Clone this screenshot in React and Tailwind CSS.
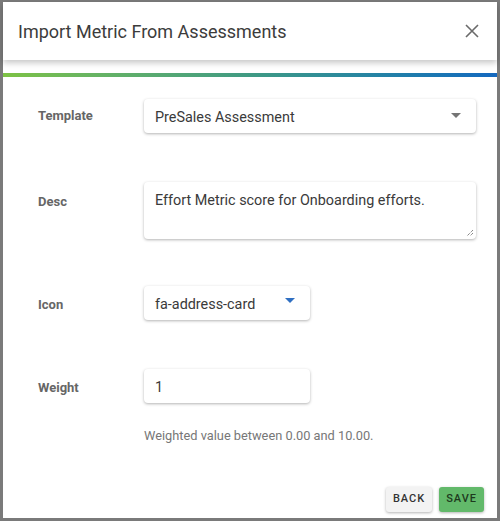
export default function App() {
  return (
    <div className="w-[500px] h-[521px] bg-[#7a7a7a] pl-[3px] pr-[3px] pt-[2px] pb-[3px]" style={{ fontFamily: "Roboto, 'Liberation Sans', sans-serif" }}>
      <div className="w-full h-full bg-white flex flex-col">
        <div className="h-[58px] flex items-center justify-between pl-[15px] pr-[15px] shadow-[0_3px_6px_rgba(0,0,0,0.22)] relative z-10">
          <div className="text-[18px] text-[#3c3c3c]">Import Metric From Assessments</div>
          <svg width="14" height="14" viewBox="0 0 14 14" className="mr-[3px]">
            <path d="M1 1L13 13M13 1L1 13" stroke="#6a6a6a" strokeWidth="1.6" />
          </svg>
        </div>
        <div className="h-[13px]" />
        <div className="h-[4px] bg-gradient-to-r from-[#7dc243] via-[#3f9a83] to-[#1568bf]" />
        <div className="flex-1 flex flex-col pl-[35px] pr-[21px]">
          <div className="flex items-start mt-[22px]">
            <div className="w-[106px] text-[13px] font-bold text-[#666] pt-[7px]">Template</div>
            <div className="flex-1 h-[34px] rounded-[4px] shadow-[0_1px_3px_rgba(0,0,0,0.3)] flex items-center justify-between pl-[11px] pr-[15px] pt-[3px] text-[14.4px] text-[#3a3a3a]">
              <span>PreSales Assessment</span>
              <svg width="10" height="5" viewBox="0 0 10 5" className="mb-[4px]"><path d="M0 0L10 0L5 5Z" fill="#757575" /></svg>
            </div>
          </div>
          <div className="flex items-start mt-[49px]">
            <div className="w-[106px] text-[13px] font-bold text-[#666] pt-[10px]">Desc</div>
            <div className="flex-1 h-[57px] rounded-[4px] shadow-[0_1px_3px_rgba(0,0,0,0.3)] pl-[11px] pt-[8px] text-[14.4px] text-[#3a3a3a] relative">
              Effort Metric score for Onboarding efforts.
              <svg width="9" height="9" viewBox="0 0 9 9" className="absolute right-[2px] bottom-[2px]">
                <path d="M8 2L2 8M8 5L5 8" stroke="#555" strokeWidth="1" strokeDasharray="1 1" />
              </svg>
            </div>
          </div>
          <div className="flex items-start mt-[47px]">
            <div className="w-[106px] text-[13px] font-bold text-[#666] pt-[9px]">Icon</div>
            <div className="w-[166px] h-[34px] rounded-[4px] shadow-[0_1px_3px_rgba(0,0,0,0.3)] flex items-center justify-between pl-[11px] pr-[15px] pt-[3px] text-[14.4px] text-[#3a3a3a]">
              <span>fa-address-card</span>
              <svg width="10" height="5" viewBox="0 0 10 5" className="mb-[8px]"><path d="M0 0L10 0L5 5Z" fill="#2f6fc2" /></svg>
            </div>
          </div>
          <div className="flex items-start mt-[49px]">
            <div className="w-[106px] text-[13px] font-bold text-[#666] pt-[9px]">Weight</div>
            <div className="w-[166px] h-[34px] rounded-[4px] shadow-[0_1px_3px_rgba(0,0,0,0.3)] flex items-center pl-[11px] pt-[3px] text-[14.4px] text-[#3a3a3a]">
              1
            </div>
          </div>
          <div className="pl-[106px] mt-[23px] text-[12.8px] text-[#777]">Weighted value between 0.00 and 10.00.</div>
          <div className="flex-1" />
          <div className="flex justify-end gap-[7px] pb-[6px] -mr-[8px]">
            <button className="h-[25px] px-[7px] rounded-[3px] bg-[#f3f3f3] shadow-[0_1px_3px_rgba(0,0,0,0.3)] text-[11px] tracking-[1px] text-[#333] font-medium">BACK</button>
            <button className="h-[25px] px-[7px] rounded-[3px] bg-[#62b96a] shadow-[0_1px_3px_rgba(0,0,0,0.3)] text-[11px] tracking-[1px] text-[#1e3a1e] font-medium">SAVE</button>
          </div>
        </div>
      </div>
    </div>
  );
}
